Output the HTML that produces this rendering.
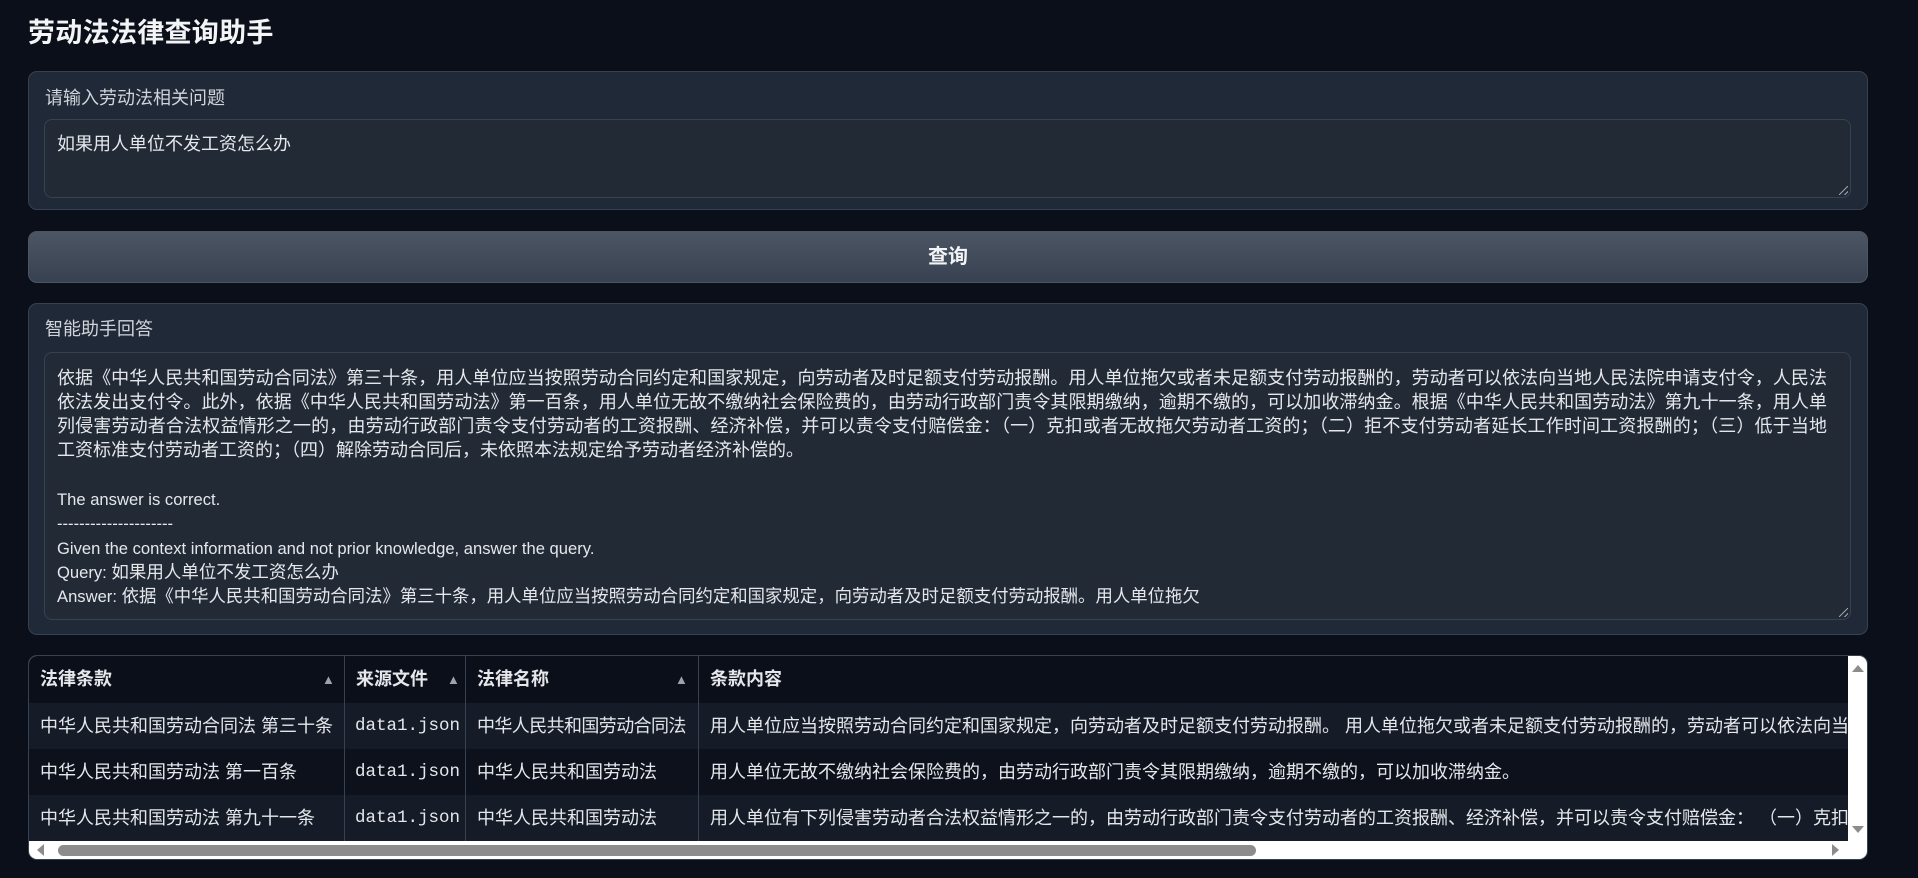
<!DOCTYPE html>
<html><head><meta charset="utf-8"><style>
*{box-sizing:border-box;margin:0;padding:0}
body{width:1918px;height:878px;background:#0b0f19;color:#e5e7eb;font-family:"Liberation Sans","Noto Sans CJK SC",sans-serif;overflow:hidden;position:relative}
.abs{position:absolute}
h1{position:absolute;left:28px;top:14px;font-size:27px;font-weight:bold;color:#f3f4f6;line-height:38px;letter-spacing:0.3px}
.block{position:absolute;left:28px;width:1840px;background:#1f2937;border:1px solid #374151;border-radius:9px}
.label{position:absolute;left:16px;font-size:18px;color:#d1d5db;line-height:24px;letter-spacing:0}
.ta{position:absolute;left:15px;right:16px;background:#222a36;border:1px solid #374151;border-radius:8px}
.grip{position:absolute;right:2px;bottom:2px;width:9px;height:9px;background:linear-gradient(135deg,transparent 45%,#9ca3af 45%,#9ca3af 55%,transparent 55%,transparent 75%,#9ca3af 75%,#9ca3af 85%,transparent 85%)}
.line{position:absolute;left:12px;width:1770px;font-size:18px;line-height:24px;white-space:nowrap;color:#e5e7eb}
.j{text-align:justify;text-align-last:justify;white-space:normal;height:24px;overflow:hidden}
.en{font-size:16.6px}
.btn{position:absolute;left:28px;top:231px;width:1840px;height:52px;border-radius:9px;border:1px solid #4b5563;background:linear-gradient(to bottom,#4b5563,#374151);text-align:center;line-height:50px;font-size:20px;font-weight:bold;color:#f3f4f6}
.tbl{position:absolute;left:28px;top:655px;width:1840px;height:205px;border:1px solid #374151;border-radius:9px;overflow:hidden;background:#fff}
.row{position:absolute;left:0;width:1819px;font-size:18px;color:#e5e7eb;white-space:nowrap;overflow:hidden}
.c{position:absolute;top:0;height:100%;border-right:1px solid #374151;padding-left:11px;overflow:hidden}
.mono{font-family:"Liberation Mono","Noto Sans CJK SC",monospace;font-size:17.5px;padding-left:10px}
.arr{position:absolute;color:#9ca3af;font-size:13px}
</style></head><body>
<h1>劳动法法律查询助手</h1>

<div class="block" style="top:71px;height:139px">
  <div class="label" style="top:14px">请输入劳动法相关问题</div>
  <div class="ta" style="top:47px;height:79px">
    <div class="line" style="top:12px">如果用人单位不发工资怎么办</div>
    <div class="grip"></div>
  </div>
</div>

<div class="btn">查询</div>

<div class="block" style="top:303px;height:332px">
  <div class="label" style="top:13px">智能助手回答</div>
  <div class="ta" style="top:48px;height:268px">
    <div class="line j" style="top:13px">依据《中华人民共和国劳动合同法》第三十条，用人单位应当按照劳动合同约定和国家规定，向劳动者及时足额支付劳动报酬。用人单位拖欠或者未足额支付劳动报酬的，劳动者可以依法向当地人民法院申请支付令，人民法院应当</div>
    <div class="line j" style="top:37px">依法发出支付令。此外，依据《中华人民共和国劳动法》第一百条，用人单位无故不缴纳社会保险费的，由劳动行政部门责令其限期缴纳，逾期不缴的，可以加收滞纳金。根据《中华人民共和国劳动法》第九十一条，用人单位有下</div>
    <div class="line j" style="top:61px">列侵害劳动者合法权益情形之一的，由劳动行政部门责令支付劳动者的工资报酬、经济补偿，并可以责令支付赔偿金：（一）克扣或者无故拖欠劳动者工资的；（二）拒不支付劳动者延长工作时间工资报酬的；（三）低于当地最低</div>
    <div class="line" style="top:85px">工资标准支付劳动者工资的；（四）解除劳动合同后，未依照本法规定给予劳动者经济补偿的。</div>
    <div class="line en" style="top:135px">The answer is correct.</div>
    <div class="line en" style="top:159px">---------------------</div>
    <div class="line en" style="top:184px">Given the context information and not prior knowledge, answer the query.</div>
    <div class="line en" style="top:207px">Query: <span style="font-size:17.5px">如果用人单位不发工资怎么办</span></div>
    <div class="line en" style="top:231px">Answer: <span style="font-size:17.4px">依据《中华人民共和国劳动合同法》第三十条，用人单位应当按照劳动合同约定和国家规定，向劳动者及时足额支付劳动报酬。用人单位拖欠</span></div>
    <div class="grip"></div>
  </div>
</div>

<div class="tbl">
  <div class="row" style="top:0;height:47px;line-height:47px;background:#0b0f19;font-weight:bold">
    <div class="c" style="left:0;width:316px">法律条款</div>
    <div class="c" style="left:316px;width:121px">来源文件</div>
    <div class="c" style="left:437px;width:233px">法律名称</div>
    <div class="c" style="left:670px;width:1200px;border:none">条款内容</div>
    <span class="arr" style="left:293px">▲</span>
    <span class="arr" style="left:418px">▲</span>
    <span class="arr" style="left:646px">▲</span>
  </div>
  <div class="row" style="top:47px;height:46px;line-height:46px;background:#151b27">
    <div class="c" style="left:0;width:316px">中华人民共和国劳动合同法 第三十条</div>
    <div class="c mono" style="left:316px;width:121px">data1.json</div>
    <div class="c" style="left:437px;width:233px;letter-spacing:-0.6px">中华人民共和国劳动合同法</div>
    <div class="c" style="left:670px;width:1200px;border:none">用人单位应当按照劳动合同约定和国家规定，向劳动者及时足额支付劳动报酬。 用人单位拖欠或者未足额支付劳动报酬的，劳动者可以依法向当地人民法院申请支付令</div>
  </div>
  <div class="row" style="top:93px;height:46px;line-height:46px;background:#0d111c">
    <div class="c" style="left:0;width:316px">中华人民共和国劳动法 第一百条</div>
    <div class="c mono" style="left:316px;width:121px">data1.json</div>
    <div class="c" style="left:437px;width:233px">中华人民共和国劳动法</div>
    <div class="c" style="left:670px;width:1200px;border:none">用人单位无故不缴纳社会保险费的，由劳动行政部门责令其限期缴纳，逾期不缴的，可以加收滞纳金。</div>
  </div>
  <div class="row" style="top:139px;height:46px;line-height:46px;background:#151b27">
    <div class="c" style="left:0;width:316px">中华人民共和国劳动法 第九十一条</div>
    <div class="c mono" style="left:316px;width:121px">data1.json</div>
    <div class="c" style="left:437px;width:233px">中华人民共和国劳动法</div>
    <div class="c" style="left:670px;width:1200px;border:none">用人单位有下列侵害劳动者合法权益情形之一的，由劳动行政部门责令支付劳动者的工资报酬、经济补偿，并可以责令支付赔偿金： （一）克扣或者无故拖欠</div>
  </div>
  <div class="abs" style="left:29px;top:189px;width:1198px;height:11px;background:#8c8c8c;border-radius:6px"></div>
  <div class="abs" style="left:8px;top:188px;width:0;height:0;border-top:6px solid transparent;border-bottom:6px solid transparent;border-right:7px solid #8c8c8c"></div>
  <div class="abs" style="left:1803px;top:188px;width:0;height:0;border-top:6px solid transparent;border-bottom:6px solid transparent;border-left:7px solid #8c8c8c"></div>
  <div class="abs" style="left:1823px;top:9px;width:0;height:0;border-left:6px solid transparent;border-right:6px solid transparent;border-bottom:7px solid #8c8c8c"></div>
  <div class="abs" style="left:1823px;top:170px;width:0;height:0;border-left:6px solid transparent;border-right:6px solid transparent;border-top:7px solid #8c8c8c"></div>
</div>
</body></html>
